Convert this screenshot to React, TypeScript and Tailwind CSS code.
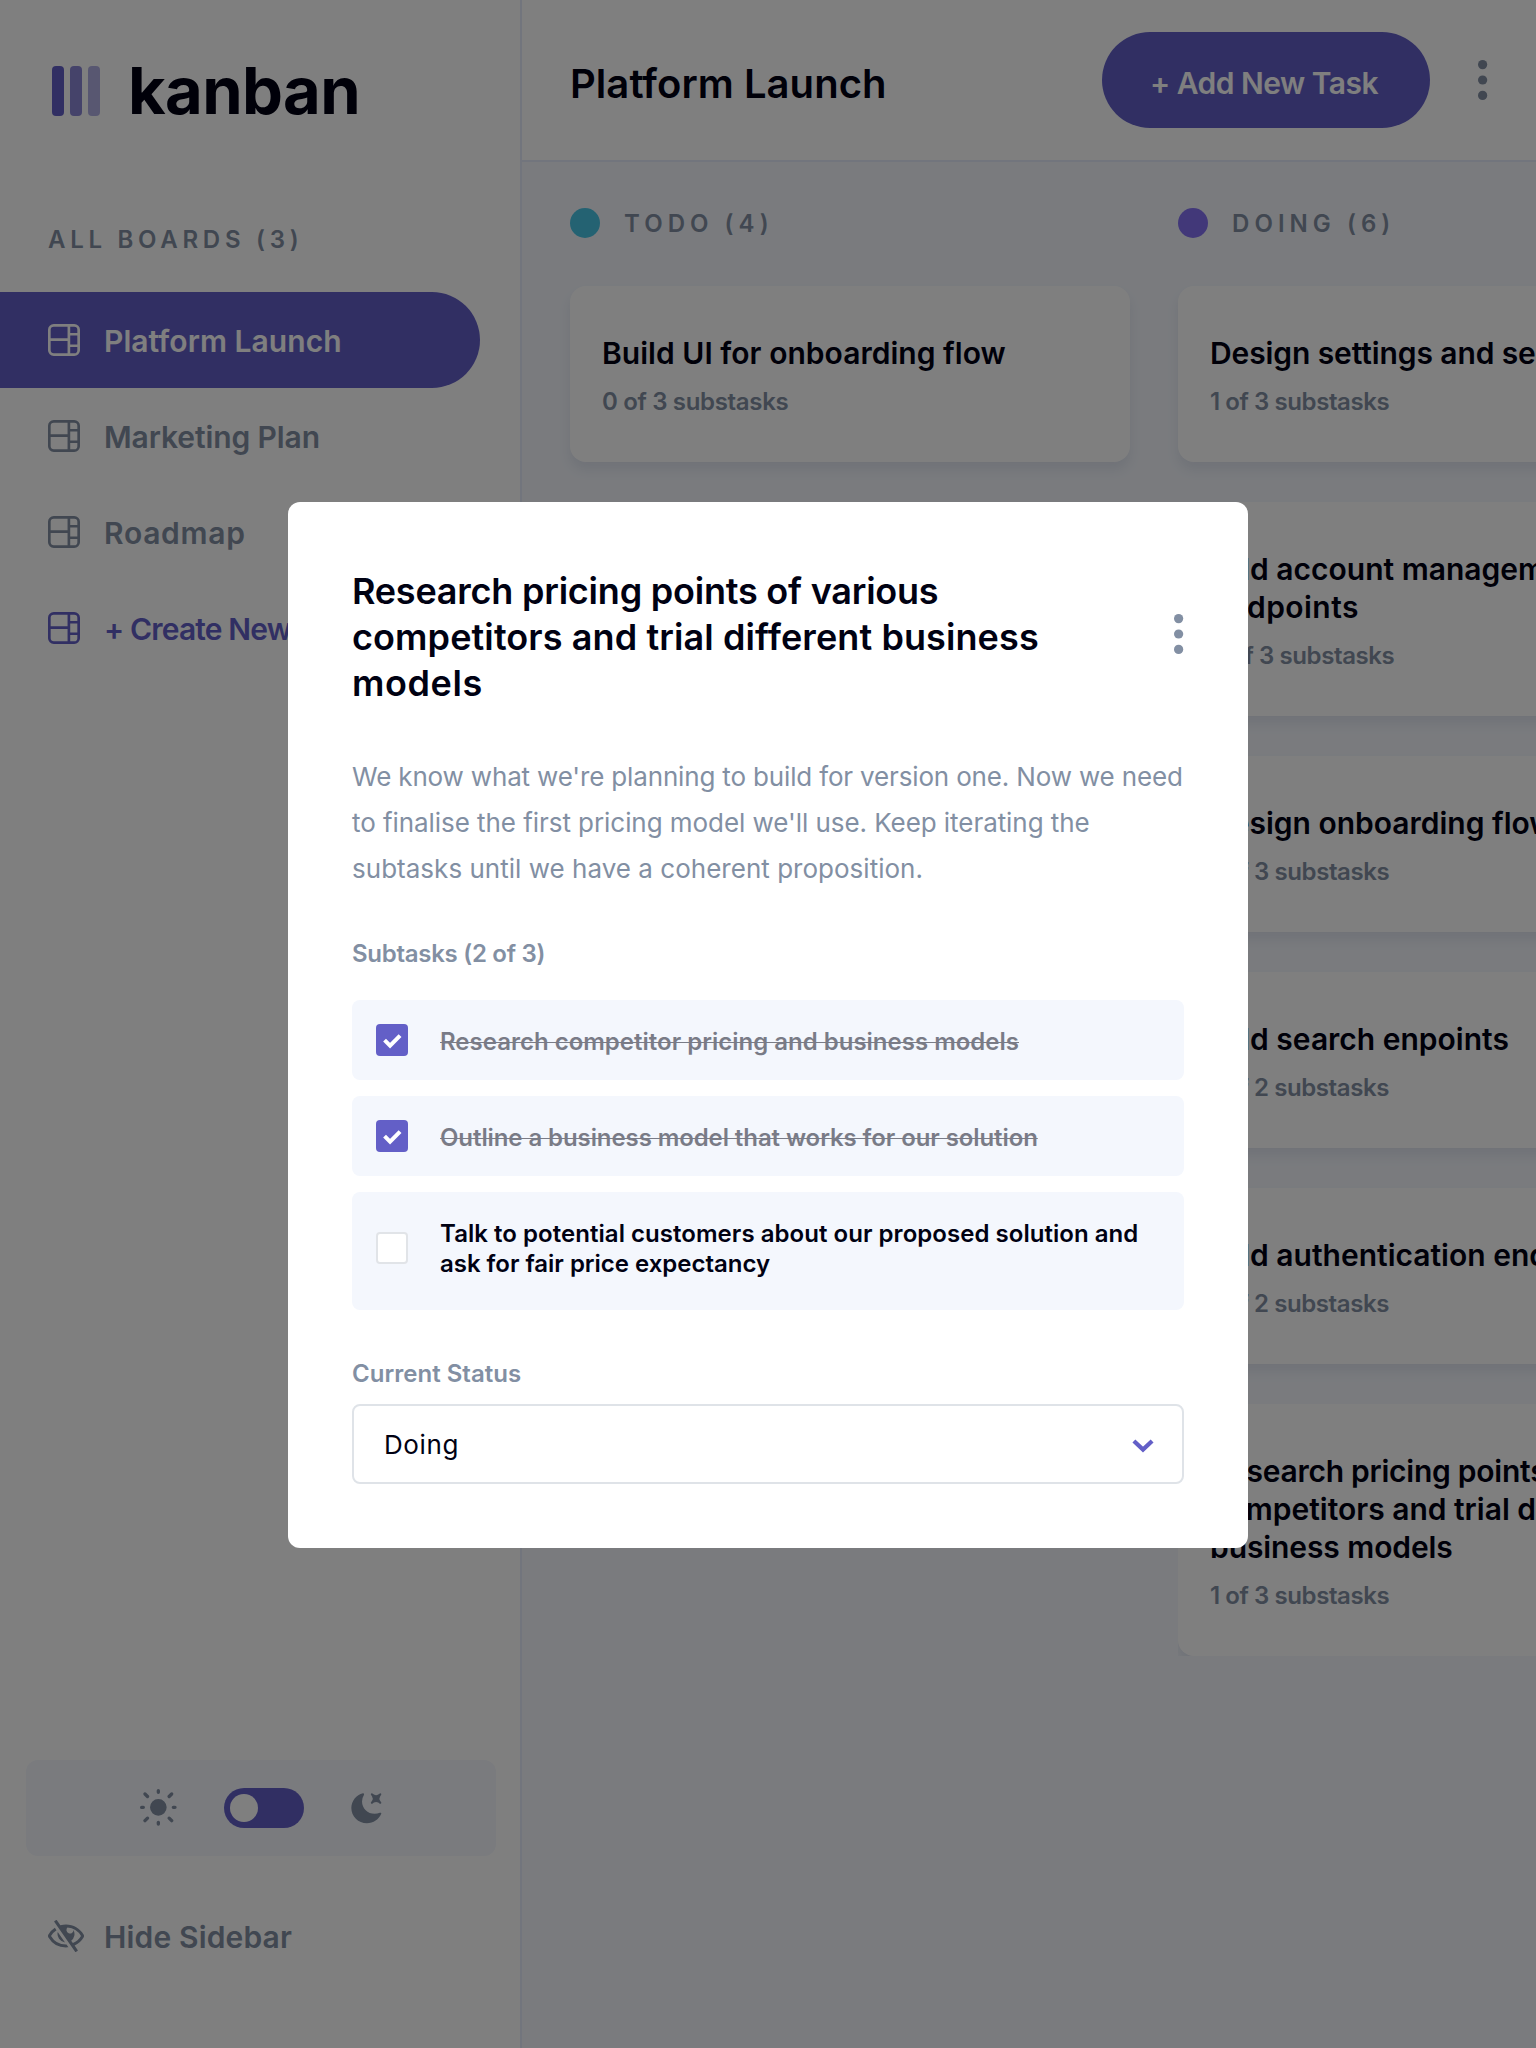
import React from 'react';

type Line = { text: string; tracking?: string };

function BoardIcon() {
  return (
    <svg className="h-8 w-8 shrink-0" viewBox="0 0 16 16" fill="currentColor">
      <path d="M0 2.889A2.889 2.889 0 0 1 2.889 0H13.11A2.889 2.889 0 0 1 16 2.889V13.11A2.888 2.888 0 0 1 13.111 16H2.89A2.889 2.889 0 0 1 0 13.111V2.89Zm1.333 5.555v4.667c0 .859.697 1.556 1.556 1.556h6.889V8.444H1.333Zm8.445-1.333V1.333h-6.89A1.556 1.556 0 0 0 1.334 2.89V7.11h8.445Zm4.889-1.333H11.11v4.444h3.556V5.778Zm0 5.778H11.11v3.11h2a1.556 1.556 0 0 0 1.556-1.555v-1.555Zm0-7.112V2.89a1.555 1.555 0 0 0-1.556-1.556h-2v3.111h3.556Z" />
    </svg>
  );
}

function SunIcon() {
  return (
    <svg className="h-[38px] w-[38px]" viewBox="0 0 19 19" fill="currentColor">
      <path d="M9.167 15.833a.833.833 0 0 1 .833.834v.833a.833.833 0 0 1-1.667 0v-.833a.833.833 0 0 1 .834-.834ZM3.75 13.75a.833.833 0 0 1 .59 1.422l-1.25 1.25a.833.833 0 0 1-1.18-1.178l1.25-1.25a.833.833 0 0 1 .59-.244Zm10.833 0c.221 0 .433.088.59.244l1.25 1.25a.833.833 0 0 1-1.179 1.178l-1.25-1.25a.833.833 0 0 1 .59-1.422ZM9.167 5a4.167 4.167 0 1 1 0 8.334 4.167 4.167 0 0 1 0-8.334Zm-7.5 3.333a.833.833 0 0 1 0 1.667H.833a.833.833 0 1 1 0-1.667h.834Zm15.833 0a.833.833 0 0 1 0 1.667h-.833a.833.833 0 0 1 0-1.667h.833Zm-1.667-6.666a.833.833 0 0 1 .59 1.422l-1.25 1.25a.833.833 0 1 1-1.179-1.178l1.25-1.25a.833.833 0 0 1 .59-.244Zm-13.333 0c.221 0 .433.088.59.244l1.25 1.25a.833.833 0 0 1-1.18 1.178L1.91 3.09a.833.833 0 0 1 .59-1.422ZM9.167 0A.833.833 0 0 1 10 .833v.834a.833.833 0 0 1-1.667 0V.833A.833.833 0 0 1 9.167 0Z" />
    </svg>
  );
}

function MoonIcon() {
  return (
    <svg className="h-8 w-8" viewBox="0 0 16 16" fill="currentColor">
      <path d="M6.474.682c.434-.11.718.406.481.78A6.067 6.067 0 0 0 6.01 4.72c0 3.418 2.827 6.187 6.314 6.187.89.002 1.77-.182 2.584-.54.408-.18.894.165.724.57-1.16 2.775-3.944 4.73-7.194 4.73-4.292 0-7.771-3.41-7.771-7.615 0-3.541 2.466-6.518 5.807-7.37Zm8.433.07c.442-.294.969.232.674.674l-.525.787a1.943 1.943 0 0 0 0 2.157l.525.788c.295.441-.232.968-.674.673l-.787-.525a1.943 1.943 0 0 0-2.157 0l-.786.525c-.442.295-.97-.232-.675-.673l.525-.788a1.943 1.943 0 0 0 0-2.157l-.525-.787c-.295-.442.232-.968.674-.673l.787.525a1.943 1.943 0 0 0 2.157 0l.787-.526Z" />
    </svg>
  );
}

function HideIcon() {
  return (
    <svg className="h-8 w-9 shrink-0" viewBox="0 0 18 16" fill="currentColor">
      <path d="M8.522 11.223a4.252 4.252 0 0 1-3.654-5.22l3.654 5.22ZM9 12.25A8.685 8.685 0 0 1 1.5 8a8.612 8.612 0 0 1 2.76-2.864l-.86-1.23A10.112 10.112 0 0 0 .208 7.238a1.5 1.5 0 0 0 0 1.524A10.187 10.187 0 0 0 9 13.75c.414 0 .828-.025 1.239-.074l-1-1.43A8.88 8.88 0 0 1 9 12.25Zm8.792-3.488a10.14 10.14 0 0 1-4.486 4.046l1.504 2.148a.375.375 0 0 1-.092.523l-.648.453a.375.375 0 0 1-.523-.092L3.19 1.044A.375.375 0 0 1 3.282.52L3.93.068a.375.375 0 0 1 .523.092l1.735 2.479A10.308 10.308 0 0 1 9 2.25c3.746 0 7.031 2 8.792 4.988a1.5 1.5 0 0 1 0 1.524ZM16.5 8a8.674 8.674 0 0 0-6.755-4.219A1.75 1.75 0 1 0 12.75 5v-.001a4.25 4.25 0 0 1-1.154 5.366l.834 1.192A8.641 8.641 0 0 0 16.5 8Z" />
    </svg>
  );
}

function Dots({ className = '' }: { className?: string }) {
  return (
    <svg className={`h-10 w-[10px] shrink-0 text-[#828FA3] ${className}`} viewBox="0 0 5 20" fill="currentColor">
      <circle cx="2.308" cy="2.308" r="2.308" />
      <circle cx="2.308" cy="10" r="2.308" />
      <circle cx="2.308" cy="17.692" r="2.308" />
    </svg>
  );
}

const boards = [
  { name: 'Platform Launch', tone: 'bg-[#635FC7] text-white', tracking: 'tracking-[0.05px]' },
  { name: 'Marketing Plan', tone: 'text-[#828FA3]', tracking: 'tracking-[-0.1px]' },
  { name: 'Roadmap', tone: 'text-[#828FA3]', tracking: 'tracking-[0.7px]' },
  { name: '+ Create New Board', tone: 'text-[#635FC7]', tracking: 'tracking-[-0.85px]' },
];

function Sidebar() {
  return (
    <aside className="flex w-[522px] shrink-0 flex-col border-r-2 border-[#E4EBFA] bg-white pt-[66px]">
      <div className="flex h-[50px] items-center gap-[28px] pl-[52px]">
        <div className="flex gap-[6px]">
          <span className="h-[50px] w-3 rounded bg-[#635FC7]" />
          <span className="h-[50px] w-3 rounded bg-[#635FC7]/75" />
          <span className="h-[50px] w-3 rounded bg-[#635FC7]/50" />
        </div>
        <span className="pb-px text-[65px] leading-[50px] font-bold tracking-[-0.6px]">kanban</span>
      </div>
      <h2 className="mt-[109px] pl-12 text-2xl leading-[30px] font-semibold tracking-[4.72px] text-[#828FA3]">
        ALL BOARDS (3)
      </h2>
      <nav className="mt-[37px] flex flex-col">
        {boards.map((b) => (
          <a key={b.name} className={`flex h-24 w-[480px] items-center gap-6 rounded-r-full pl-12 ${b.tone}`}>
            <BoardIcon />
            <span className={`pt-[2px] text-[30px] leading-[38px] font-semibold whitespace-nowrap ${b.tracking}`}>
              {b.name}
            </span>
          </a>
        ))}
      </nav>
      <div className="mt-auto mb-16 ml-[26px] flex h-24 w-[470px] items-center gap-[46px] rounded-xl bg-[#F4F7FD] pl-[114px] text-[#828FA3]">
        <SunIcon />
        <div className="flex h-10 w-20 items-center rounded-full bg-[#635FC7] pl-[6px]">
          <span className="h-7 w-7 rounded-full bg-white" />
        </div>
        <MoonIcon />
      </div>
      <div className="mb-24 flex h-8 items-center gap-5 pl-12 text-[#828FA3]">
        <HideIcon />
        <span className="pt-[2px] text-[30px] leading-[38px] font-semibold tracking-[0.15px]">Hide Sidebar</span>
      </div>
    </aside>
  );
}

function Header() {
  return (
    <header className="flex h-[162px] items-center border-b-2 border-[#E4EBFA] bg-white pr-12 pl-12">
      <h1 className="pt-[7px] text-[40px] leading-[50px] font-semibold tracking-[0.05px]">Platform Launch</h1>
      <button className="ml-auto h-24 w-[328px] rounded-full bg-[#635FC7] pt-[6px] pr-[4px] text-[30px] leading-[38px] font-semibold tracking-[-0.53px] text-white">
        + Add New Task
      </button>
      <Dots className="ml-12" />
    </header>
  );
}

type Card = { lines: Line[]; sub: string; subTracking: string; clip?: boolean };
type Column = { title: string; tracking: string; dot: string; cards: Card[] };

const columns: Column[] = [
  {
    title: 'TODO (4)',
    tracking: 'tracking-[5.05px]',
    dot: 'bg-[#49C4E5]',
    cards: [
      {
        lines: [{ text: 'Build UI for onboarding flow', tracking: 'tracking-[0.03px]' }],
        sub: '0 of 3 substasks',
        subTracking: 'tracking-[-0.33px]',
      },
    ],
  },
  {
    title: 'DOING (6)',
    tracking: 'tracking-[5.05px]',
    dot: 'bg-[#8471F2]',
    cards: [
      {
        lines: [{ text: 'Design settings and search pages', tracking: 'tracking-[-0.1px]' }],
        sub: '1 of 3 substasks',
        subTracking: 'tracking-[-0.42px]',
      },
      {
        lines: [{ text: 'Add account management' }, { text: 'endpoints', tracking: 'tracking-[0.45px]' }],
        sub: '2 of 3 substasks',
        subTracking: 'tracking-[-0.4px]',
      },
      {
        lines: [{ text: 'Design onboarding flow' }],
        sub: '1 of 3 substasks',
        subTracking: 'tracking-[-0.42px]',
      },
      {
        lines: [{ text: 'Add search enpoints' }],
        sub: '1 of 2 substasks',
        subTracking: 'tracking-[-0.42px]',
      },
      {
        lines: [{ text: 'Add authentication endpoints' }],
        sub: '1 of 2 substasks',
        subTracking: 'tracking-[-0.42px]',
      },
      {
        lines: [
          { text: 'Research pricing points of various', tracking: 'tracking-[-0.25px]' },
          { text: 'competitors and trial different' },
          { text: 'business models', tracking: 'tracking-[-0.09px]' },
        ],
        sub: '1 of 3 substasks',
        subTracking: 'tracking-[-0.42px]',
        clip: true,
      },
    ],
  },
];

function Lines({ lines }: { lines: Line[] }) {
  return (
    <>
      {lines.map((l) => (
        <span key={l.text} className={`block whitespace-nowrap ${l.tracking ?? ''}`}>
          {l.text}
        </span>
      ))}
    </>
  );
}

function TaskCard({ card }: { card: Card }) {
  return (
    <div className={card.clip ? 'overflow-hidden' : ''}>
      <article className="rounded-2xl bg-white px-8 pt-12 pb-[45px] shadow-[0_8px_12px_rgba(54,78,126,0.1)]">
        <h3 className="text-[30px] leading-[38px] font-semibold">
          <Lines lines={card.lines} />
        </h3>
        <p className={`mt-[15px] text-2xl leading-[30px] font-semibold text-[#828FA3] ${card.subTracking}`}>
          {card.sub}
        </p>
      </article>
    </div>
  );
}

function Board() {
  return (
    <div className="flex flex-1 gap-12 pt-[46px] pl-12">
      {columns.map((col) => (
        <section key={col.title} className="w-[560px] shrink-0">
          <div className="flex h-[30px] items-center gap-6">
            <span className={`h-[30px] w-[30px] rounded-full ${col.dot}`} />
            <h2 className={`pt-[2px] text-2xl leading-[30px] font-semibold text-[#828FA3] ${col.tracking}`}>
              {col.title}
            </h2>
          </div>
          <div className="mt-12 flex flex-col gap-10">
            {col.cards.map((c) => (
              <TaskCard key={c.lines[0].text} card={c} />
            ))}
          </div>
        </section>
      ))}
    </div>
  );
}

const subtasks: { done: boolean; lines: Line[] }[] = [
  { done: true, lines: [{ text: 'Research competitor pricing and business models' }] },
  {
    done: true,
    lines: [{ text: 'Outline a business model that works for our solution', tracking: 'tracking-[-0.09px]' }],
  },
  {
    done: false,
    lines: [
      { text: 'Talk to potential customers about our proposed solution and', tracking: 'tracking-[0.04px]' },
      { text: 'ask for fair price expectancy', tracking: 'tracking-[-0.02px]' },
    ],
  },
];

function TaskModal() {
  return (
    <div className="mt-[2px] h-[1046px] w-[960px] rounded-xl bg-white px-16 pt-[66px]">
      <div className="flex items-center justify-between">
        <h2 className="text-[36px] leading-[46px] font-semibold">
          <Lines
            lines={[
              { text: 'Research pricing points of various', tracking: 'tracking-[-0.22px]' },
              { text: 'competitors and trial different business', tracking: 'tracking-[0.1px]' },
              { text: 'models', tracking: 'tracking-[0.6px]' },
            ]}
          />
        </h2>
        <Dots className="mb-[6px]" />
      </div>
      <p className="mt-12 text-[26px] leading-[46px] text-[#828FA3]">
        <Lines
          lines={[
            { text: "We know what we're planning to build for version one. Now we need", tracking: 'tracking-[-0.16px]' },
            { text: "to finalise the first pricing model we'll use. Keep iterating the", tracking: 'tracking-[-0.06px]' },
            { text: 'subtasks until we have a coherent proposition.', tracking: 'tracking-[0.02px]' },
          ]}
        />
      </p>
      <h3 className="mt-[47px] text-2xl leading-[30px] font-semibold tracking-[-0.28px] text-[#828FA3]">
        Subtasks (2 of 3)
      </h3>
      <ul className="mt-[31px] flex flex-col gap-4">
        {subtasks.map((s) => (
          <li
            key={s.lines[0].text}
            className={`flex items-start gap-8 rounded-lg bg-[#F4F7FD] pl-6 ${s.done ? 'h-20' : 'h-[118px]'}`}
          >
            {s.done ? (
              <span className="mt-6 h-8 w-8 shrink-0 rounded bg-[#635FC7] pt-[10px] pl-[6px]">
                <svg className="h-4 w-5" viewBox="0 0 10 8" fill="none">
                  <path d="m1.276 3.066 2.756 2.756 5-5" stroke="#fff" strokeWidth="2" />
                </svg>
              </span>
            ) : (
              <span className="mt-10 h-8 w-8 shrink-0 rounded border-2 border-[#E1E4E8] bg-white" />
            )}
            <span
              className={`pt-[27px] text-2xl leading-[30px] font-semibold ${s.done ? 'line-through decoration-1 opacity-50' : ''}`}
            >
              <Lines lines={s.lines} />
            </span>
          </li>
        ))}
      </ul>
      <h3 className="mt-[49px] text-2xl leading-[30px] font-semibold tracking-[0.02px] text-[#828FA3]">
        Current Status
      </h3>
      <div className="mt-[15px] flex h-20 items-center justify-between rounded-lg border-2 border-[#DFE3E8] pr-7 pl-[30px]">
        <span className="pt-px text-[26px] leading-[46px] tracking-[0.6px]">Doing</span>
        <svg className="mt-[4px] h-[14px] w-[22px]" viewBox="0 0 22 14" fill="none">
          <path d="M1.9 1.9 11 10.6l9.1-8.7" stroke="#635FC7" strokeWidth="4.2" />
        </svg>
      </div>
    </div>
  );
}

export default function App() {
  return (
    <div className="flex h-[2048px] w-[1536px] overflow-hidden bg-[#F4F7FD] font-['Inter',sans-serif] text-[#000112]">
      <Sidebar />
      <main className="flex w-[1014px] shrink-0 flex-col">
        <Header />
        <Board />
      </main>
      <div className="fixed inset-0 flex items-center justify-center bg-black/50">
        <TaskModal />
      </div>
    </div>
  );
}
